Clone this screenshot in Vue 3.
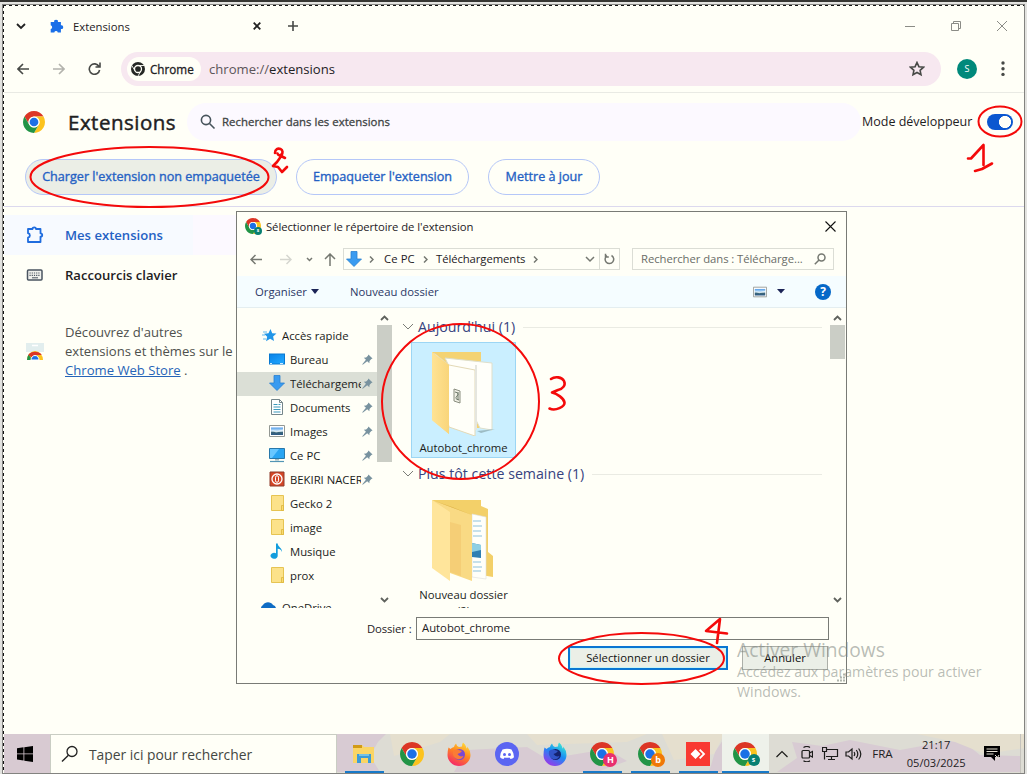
<script setup>
const quick = [
  { name: 'Bureau', icon: 'desk', pin: true },
  { name: 'Téléchargements', icon: 'down', pin: true, on: true },
  { name: 'Documents', icon: 'doc', pin: true },
  { name: 'Images', icon: 'pic', pin: true },
  { name: 'Ce PC', icon: 'pc', pin: true },
  { name: 'BEKIRI NACER', icon: 'red', pin: true },
  { name: 'Gecko 2', icon: 'fold' },
  { name: 'image', icon: 'fold' },
  { name: 'Musique', icon: 'note' },
  { name: 'prox', icon: 'fold' },
]
</script>

<template>
  <svg class="defs" width="0" height="0">
    <defs>
      <linearGradient id="gBlue" x1="0" y1="0" x2="1" y2="1"><stop offset="0" stop-color="#0a84e8" /><stop offset="1" stop-color="#21a8ff" /></linearGradient>
      <linearGradient id="gFire" x1=".8" y1="0" x2=".3" y2="1"><stop offset="0" stop-color="#ffe03a" /><stop offset=".45" stop-color="#ff8a1f" /><stop offset="1" stop-color="#f5256a" /></linearGradient>
      <linearGradient id="gDev" x1=".8" y1="0" x2=".2" y2="1"><stop offset="0" stop-color="#3ff0d0" /><stop offset=".45" stop-color="#1a8cf5" /><stop offset="1" stop-color="#a530e8" /></linearGradient>
      <linearGradient id="gFold" x1="0" y1="0" x2="1" y2="0"><stop offset="0" stop-color="#ffe394" /><stop offset="1" stop-color="#f9d57a" /></linearGradient>
      <linearGradient id="gSky" x1="0" y1="0" x2="0" y2="1"><stop offset="0" stop-color="#4f9be8" /><stop offset=".5" stop-color="#d4ecfa" /><stop offset=".6" stop-color="#3e6878" /><stop offset="1" stop-color="#2c5a86" /></linearGradient>
    </defs>
    <symbol id="chrome" viewBox="2 2 44 44">
      <path fill="#dc3626" d="M24 13h19.05A22 22 0 0 0 4.95 13l9.52 16.5A11 11 0 0 1 24 13z" />
      <path fill="#fcc31e" d="M43.05 13H24a11 11 0 0 1 9.53 16.5L24 46a22 22 0 0 0 19.05-33z" />
      <path fill="#229446" d="M4.95 13A22 22 0 0 0 24 46l9.53-16.5a11 11 0 0 1-19.06 0z" />
      <circle cx="24" cy="24" r="11" fill="#fffff7" /><circle cx="24" cy="24" r="8.7" fill="#1b70e6" />
    </symbol>
    <symbol id="desk" viewBox="0 0 16 16"><path d="M0 2.5h16v11H0z" fill="#0878d0" /><path d="M1 3.5h14v9H1z" fill="url(#gBlue)" /><path d="M1 12.5h2M11 12.5h3" stroke="#cfeaff" /></symbol>
    <symbol id="down" viewBox="0 0 16 16"><path d="M5 .5h6V8h4.500L8 15.500.5 8H5z" fill="#3a9bf0" stroke="#2a80d0" stroke-width=".8" /></symbol>
    <symbol id="doc" viewBox="0 0 16 16"><path d="M2.500.5h8l3 3v12h-11z" fill="#fff" stroke="#75868a" /><path d="M4.500 5.500h4M4.500 8h7M4.500 10.500h7M4.500 13h7M9.500 5.500h2" stroke="#3c9abb" stroke-width="1.200" /><path d="M10.500.5v3h3" fill="none" stroke="#75868a" /></symbol>
    <symbol id="pic" viewBox="0 0 16 16"><path d="M.5 2.500h15v11H.5z" fill="#fff" stroke="#939893" /><path d="M2 4.500h12v7.500H2z" fill="url(#gSky)" /><path d="M2 7l5 2.500 7-1.500v-1.500l-6 1.500z" fill="#f0f8fb" opacity=".7" /></symbol>
    <symbol id="pc" viewBox="0 0 16 16"><path d="M.5 1.500h15v10H.5z" fill="#2aa5f2" stroke="#2878aa" /><path d="M1 2h9L3 11H1z" fill="#68c7ff" /><path d="M6 12h4v1.500H6z" fill="#a3bac0" /><path d="M1 14.500h14" stroke="#5295b5" stroke-width="1.200" /></symbol>
    <symbol id="red" viewBox="0 0 16 16"><path d="M1 1h14v14H1z" fill="#d54626" stroke="#8f3d2c" /><circle cx="8" cy="8" r="5" fill="none" stroke="#fff" stroke-width="1.300" /><rect x="6.500" y="4.700" width="3" height="6.600" rx="1.500" fill="none" stroke="#fff" /></symbol>
    <symbol id="fold" viewBox="0 0 16 16"><path d="M2.500 .5h12v15h-12z" fill="#fce28a" stroke="#e6c452" /><path d="M12.500 10.500h2v5h-2z" fill="#fadb70" stroke="#dcb63d" stroke-width=".8" /></symbol>
    <symbol id="note" viewBox="0 0 16 16"><path d="M7 .5h1.700c.2 3.500 4.800 4.500 4.300 8.500-.4-2-2-3-4.300-3.200V12.500A3.600 3 0 1 1 7 10.200z" fill="#139ddd" /></symbol>
    <symbol id="pin" viewBox="0 0 12 12"><path d="M7 .5 11.500 5l-1.300.5L8.200 7.500l-.2 2.500-2.300-2.200L.8 11.800.3 11.300l4-5L2 4l2.500-.2 2-2z" fill="#78929f" /></symbol>
    <symbol id="flame" viewBox="0 0 24 24"><path d="M1.500 5.500 3.500 7q1.500-1.500 3.500-2 .3-2 2-3.500.5 2.500 3 3.500l3-.5q0-2.500 1-4 2 1.500 3 4l.5 2q1-.5.800-2 3.200 4 3.200 8.500a11.500 11 0 0 1-23 0q0-4 1-7.500z" /></symbol>
  </svg>

  <div class="shot">
    <div class="screen">
      <header class="tabs">
        <svg class="t-chev" width="10" height="10"><path d="M1 3l4 4 4-4" class="ln dark" /></svg>
        <svg class="t-puz" width="14" height="14" viewBox="0 0 14 14"><path d="M1.500 3H4.200a1.900 1.900 0 1 1 3.700 0h3v3.300a1.900 1.900 0 1 1 0 3.700v3.500H7.800a1.800 1.800 0 0 0-3.500 0H.7V10a1.900 1.900 0 0 0 0-3.700V3z" fill="#1a6fe8" /></svg>
        <span class="t-name">Extensions</span>
        <svg class="t-x" width="8" height="8"><path d="M.7.7l6.600 6.600M7.300.7.7 7.300" class="ln dark" /></svg>
        <svg class="t-plus" width="10" height="10"><path d="M5 0v10M0 5h10" class="ln" /></svg>
        <div class="winbtns">
          <svg width="10" height="10"><path d="M0 5.500h10" class="thin" /></svg>
          <svg width="10" height="10"><path d="M.5 2.500h7v7h-7zM2.500 2.500v-2h7v7h-2" class="thin" /></svg>
          <svg width="10" height="10"><path d="M0 0l10 10M10 0 0 10" class="thin" /></svg>
        </div>
      </header>

      <nav class="toolbar">
        <svg class="b-back" width="12" height="12"><path d="M12 6H1M6 1 1 6l5 5" class="ln" /></svg>
        <svg class="b-fwd" width="12" height="12"><path d="M0 6h11M6 1l5 5-5 5" class="ln pale" /></svg>
        <svg class="b-rel" width="13" height="13"><path d="M11 4.500A5.200 5.200 0 1 0 11.600 8M12 .5v4.500H7.500" class="ln" /></svg>
        <div class="omni">
          <div class="chip">
            <svg width="14" height="14" viewBox="0 0 14 14"><circle cx="7" cy="7" r="7" fill="#252725" /><circle cx="7" cy="7" r="3.500" fill="none" stroke="#fffff7" stroke-width="1.300" /><path d="M7 3.500h6.500M4 8.800.8 3.500M10 8.800 7 14" stroke="#fffff7" stroke-width=".9" /></svg>
            <span>Chrome</span>
          </div>
          <span class="url"><i>chrome://</i>extensions</span>
          <svg class="star" width="16" height="16" viewBox="0 0 16 16"><path d="M8 1.500l1.900 4.200 4.600.5-3.400 3.100.9 4.500L8 11.500l-4 2.300.9-4.500L1.500 6.200l4.600-.5z" class="ln" /></svg>
        </div>
        <span class="avatar">S</span>
        <svg class="dots" width="4" height="16"><circle cx="2" cy="2" r="1.700" /><circle cx="2" cy="7.700" r="1.700" /><circle cx="2" cy="13.400" r="1.700" /></svg>
      </nav>

      <div class="head">
        <svg class="logo" width="22" height="22"><use href="#chrome" /></svg>
        <h1>Extensions</h1>
        <div class="search">
          <svg width="16" height="16"><circle cx="6" cy="6" r="4.600" class="ln slate" /><path d="M9.500 9.500l5 5" class="ln slate" /></svg>
          <span>Rechercher dans les extensions</span>
        </div>
        <span class="dev">Mode développeur</span>
        <span class="toggle"></span>
      </div>

      <div class="acts">
        <button class="a1">Charger l'extension non empaquetée</button>
        <button class="a2">Empaqueter l'extension</button>
        <button class="a3">Mettre à jour</button>
      </div>

      <aside>
        <div class="s-item sel">
          <svg width="18" height="18" viewBox="0 0 18 18"><path d="M2 3h4.500c0-2.200 3.500-2.200 3.500 0h4.500v4.300c2.300 0 2.300 3.400 0 3.400V16H2v-4.300c2.500-.8 2.500-3.800 0-4.500z" fill="none" stroke="#1f6cde" stroke-width="1.800" stroke-linejoin="round" /></svg>
          <span>Mes extensions</span>
        </div>
        <div class="s-item">
          <svg width="18" height="14" viewBox="0 0 18 14"><rect x="1.500" y="2" width="14.500" height="10" rx="1" fill="#f0f1ed" stroke="#4a5460" stroke-width="1.500" /><path d="M3.500 5h11M3.500 7.300h11" stroke="#4a5460" stroke-width="1.200" stroke-dasharray="1.200 1" /><path d="M6 9.800h6" stroke="#4a5460" /></svg>
          <span>Raccourcis clavier</span>
        </div>
        <div class="store">
          <svg width="18" height="18" viewBox="0 0 18 18"><path d="M0 0h18v9H0z" fill="#e2eeee" /><path d="M6 2.500h6" stroke="#fff" stroke-width="1.500" /><path d="M1 17a8 9 0 0 1 16 0z" fill="#fcc31e" /><path d="M1 17q0-3 1.500-5.500L6.500 17z" fill="#229446" /><path d="M2.200 12a8 7 0 0 1 13.600 0L11 12l-5 2.500z" fill="#dc3626" /><path d="M5 17a4 4.500 0 0 1 8 0z" fill="#1b70e6" stroke="#fff" /></svg>
          <p>Découvrez d'autres<br>extensions et thèmes sur le<br><a>Chrome Web Store</a> .</p>
        </div>
      </aside>

      <footer class="taskbar">
        <svg class="noise" width="1020" height="38"><path fill="#d8cbd3" d="M333 0h49l-8 8-8 14 10 16h-43zM463 16l60-3 20 12 60-10 20 12-30 11H450zM723 0h16l-8 9 14 10-20 19h-20l6-20zM788 8l30 4 28-6 50 10 60-11 20 16 40 1v16H773l20-14z" /><path fill="#e5dfce" d="M386 0h60l-10 8-46 14zM523 0h120l-20 8-90 3zM658 0h62l-10 20-40 6zM913 0h108v14l-40 6-30-12z" /></svg>
        <div class="start"><svg width="16" height="16" viewBox="0 0 16 16"><path d="M0 2.200 6.500 1.300V7.500H0zM7.300 1.200 16 0v7.500H7.300zM0 8.300h6.500v6.200L0 13.600zM7.300 8.300H16V16l-8.700-1.200z" /></svg></div>
        <div class="find">
          <svg width="18" height="18" viewBox="0 0 18 18"><circle cx="11" cy="6.500" r="5" fill="none" stroke="#222" stroke-width="1.300" /><path d="M7.400 10.200 1 16.500" stroke="#222" stroke-width="1.400" /></svg>
          <span>Taper ici pour rechercher</span>
        </div>
        <div class="apps">
          <div class="app run"><svg width="24" height="24" viewBox="0 0 24 24"><path d="M1 3h9l2 2h10v16H1z" fill="#fad565" /><path d="M1 3h9v3H1z" fill="#d29b18" /><path d="M5 12h14v9h-3v-5H9v5H5z" fill="#3b9bd8" /><path d="M7 12h10v2H7z" fill="#73c1e8" /></svg></div>
          <div class="app"><svg width="24" height="24"><use href="#chrome" /></svg></div>
          <div class="app"><svg width="24" height="24" viewBox="0 0 24 24"><use href="#flame" fill="url(#gFire)" /><circle cx="12.500" cy="12.500" r="5.500" fill="#7a48d2" /><path d="M6 9q4-2.500 6.500-.8l2.500.8-2 2-2.500 1q2 3.500 6 2-2 4-6.500 3-5-2-4-8z" fill="#fb7c35" /></svg></div>
          <div class="app"><svg width="24" height="24" viewBox="0 0 24 24"><circle cx="12" cy="12" r="12" fill="#5b65f2" /><path d="M7.500 7.500Q12 6 16.500 7.500 19 11 19 15.300 17.500 17 15.500 17l-1-1.500q-2.500.7-5 0l-1 1.500Q6.500 17 5 15.300 5 11 7.500 7.500z" fill="#fff" /><circle cx="9.500" cy="12.500" r="1.500" fill="#5b65f2" /><circle cx="14.500" cy="12.500" r="1.500" fill="#5b65f2" /></svg></div>
          <div class="app"><svg width="24" height="24" viewBox="0 0 24 24"><use href="#flame" fill="url(#gDev)" /><circle cx="12.500" cy="12.500" r="5.500" fill="#15226f" /><path d="M6 9q4-2.500 6.500-.8l2.500.8-2 2-2.500 1q2 3.500 6 2-2 4-6.500 3-5-2-4-8z" fill="#3154c8" /></svg></div>
          <div class="app run"><svg width="24" height="24"><use href="#chrome" /></svg><b class="bh">H</b></div>
          <div class="app run"><svg width="24" height="24"><use href="#chrome" /></svg><b class="bb">b</b></div>
          <div class="app run"><svg width="24" height="24"><path d="M0 0h24v24H0z" fill="#f93a32" /><path d="M9.500 7l5 5-5 5-5-5zM13 8.300 14.300 7l5 5-5 5L13 15.700l3.700-3.700z" fill="#fff" /></svg></div>
          <div class="app run act"><svg width="24" height="24"><use href="#chrome" /></svg><b class="bs">s</b></div>
        </div>
        <div class="tray">
          <svg class="k1" width="12" height="8"><path d="M.5 7 6 1.500 11.500 7" class="tk" /></svg>
          <svg class="k2" width="12" height="16"><rect x="1" y="4.500" width="7.500" height="7.500" rx="1" class="tk" /><path d="M8.500 7l3-1.500v5.500l-3-1.500M2.500 1.500Q6-.5 9 1.500M2.500 14.800q3.500 2 6.500 0" class="tk" /></svg>
          <svg class="k3" width="17" height="15"><path d="M4.500 3.500h11v7H4M9.500 10.500v3M6 13.500h7M.5 1.500h4v4h-4zM2.500 5.500v8" class="tk" /></svg>
          <svg class="k4" width="17" height="14"><path d="M1 5h2.500L7 2v10L3.500 9H1zM9 5q1.500 2 0 4M11.300 3q3 4 0 8M13.600 1.500q4.400 5.500 0 11" class="tk" /></svg>
          <span class="fra">FRA</span>
          <div class="clock"><span>21:17</span><span>05/03/2025</span></div>
          <svg class="k5" width="17" height="17" viewBox="0 0 17 17"><path d="M0 1h16v11h-5v4l-4-4H0z" /><path d="M2.500 4h11M2.500 6.500h11M2.500 9h7" stroke="#e4e0d2" /><path d="M11 10l4 4m0-4-3 5" stroke="#e4e0d2" /></svg>
        </div>
      </footer>
    </div>

    <section class="dialog">
      <div class="d-title">
        <span class="d-ico"><svg width="16" height="16"><use href="#chrome" /></svg><b>s</b></span>
        <span class="d-cap">Sélectionner le répertoire de l'extension</span>
        <svg class="d-close" width="11" height="11"><path d="M.5.5l10 10M10.500.5l-10 10" stroke="#111" stroke-width="1.100" /></svg>
      </div>
      <div class="d-nav">
        <svg class="n1" width="12" height="11"><path d="M12 5.500H1M5.500 1 1 5.500 5.500 10" class="gr" /></svg>
        <svg class="n2" width="12" height="11"><path d="M0 5.500h11M6.500 1 11 5.500 6.500 10" class="gr faint" /></svg>
        <svg class="n3" width="7" height="5"><path d="M1 1l2.500 2.500L6 1" class="gr" /></svg>
        <svg class="n4" width="12" height="13"><path d="M6 13V1M1 6l5-5 5 5" class="gr" /></svg>
        <div class="addr">
          <svg class="ad" width="16" height="16"><use href="#down" /></svg>
          <svg class="c1" width="5" height="7"><path d="M1 .5l3 3-3 3" class="gr" /></svg>
          <span class="p1">Ce PC</span>
          <svg class="c2" width="5" height="7"><path d="M1 .5l3 3-3 3" class="gr" /></svg>
          <span class="p2">Téléchargements</span>
          <svg class="c3" width="5" height="7"><path d="M1 .5l3 3-3 3" class="gr" /></svg>
          <svg class="c4" width="10" height="7"><path d="M1 1l4 4 4-4" class="gr" /></svg>
          <div class="refresh"><svg width="11" height="12"><path d="M7.500 2.500A4.300 4.300 0 1 1 3 2.700M1.500.8V4h3.300" class="gr" /></svg></div>
        </div>
        <div class="d-search"><span>Rechercher dans : Télécharge...</span><svg width="12" height="12"><circle cx="7.500" cy="4.500" r="3.500" class="gr" /><path d="M5 7 .8 11.200" class="gr" /></svg></div>
      </div>
      <div class="d-cmd">
        <span class="org">Organiser</span><svg class="tri" width="8" height="5"><path d="M0 0h8L4 5z" /></svg>
        <span class="new">Nouveau dossier</span>
        <svg class="view" width="14" height="12" viewBox="0 1.500 16 13"><use href="#pic" width="16" height="16" /></svg>
        <svg class="tri t2" width="8" height="5"><path d="M0 0h8L4 4.500z" /></svg>
        <span class="help">?</span>
      </div>
      <div class="d-body">
        <div class="tree">
          <div class="row root"><svg width="15" height="15" viewBox="0 0 15 15"><path d="M8.500 1l1.700 4.300 4.300.3-3.400 3 .9 4.400-3.900-2.300L4 13.200l1.200-4.500L2 5.700l4.500-.4z" fill="#2196e8" /><path d="M1 4h4M0 7h3M1 11h3" stroke="#62b9ed" /></svg><span>Accès rapide</span></div>
          <div v-for="q in quick" :key="q.name" class="row" :class="{ on: q.on }">
            <svg width="16" height="16"><use :href="'#' + q.icon" /></svg><span>{{ q.name }}</span>
            <svg v-if="q.pin" class="pin" width="11" height="11"><use href="#pin" /></svg>
          </div>
          <div class="row root one"><svg width="18" height="14" viewBox="0 0 18 14"><path d="M4 12a4 4 0 0 1 0-7 6 6 0 0 1 10 0q4 1 3 7z" fill="#0f6cc4" /></svg><span>OneDrive</span></div>
        </div>
        <div class="bar b-left"><svg width="9" height="6"><path d="M1 5l3.500-3.500L8 5" class="ar" /></svg><div class="thumb"></div><svg width="9" height="6"><path d="M1 1l3.500 3.500L8 1" class="ar" /></svg></div>
        <div class="list">
          <div class="group"><svg width="12" height="7"><path d="M1 1l5 5 5-5" /></svg><span>Aujourd'hui (1)</span><hr></div>
          <div class="tile picked">
            <svg width="70" height="86" viewBox="0 0 70 86"><path d="M3 2h49v76H30L3 60z" fill="#f4d373" /><path d="M3 2 20 15v69L3 70z" fill="url(#gFold)" /><path d="M16 8l47 5v67l-12-2z" fill="#fffffa" stroke="#dedfcb" /><path d="M48 81l18-2-14 4z" fill="#9dbcc4" /><path d="M5 3l15 12 26 5v66L20 77z" fill="#fffff9" stroke="#e3d9b6" /><path d="M3 2 20 15v69L3 70z" fill="url(#gFold)" /><path d="M47 15v65" stroke="#e5e6df" stroke-width="2" /><path d="M25 39l6 2v12l-6-2z" fill="#f1f1e6" stroke="#898d7f" /><path d="M26 42q5 1 2 4t2 4M29 42v8" stroke="#6d7868" fill="none" /></svg>
            <span>Autobot_chrome</span>
          </div>
          <div class="group second"><svg width="12" height="7"><path d="M1 1l5 5 5-5" /></svg><span>Plus tôt cette semaine (1)</span><hr></div>
          <div class="tile">
            <svg width="70" height="86" viewBox="0 0 70 86"><path d="M3 3h49v6l7 3v43l5 4v21l-12-2z" fill="#f3d069" /><path d="M43 17l14 3v62l-14-2z" fill="#fffffa" stroke="#ddd" stroke-width=".6" /><path d="M44 24h8m-8 5h9m-9 5h8m-8 5h9m-9 26h8m-8 5h9m-9 4h8" stroke="#8dc1dc" /><path d="M43 46l9 2v13l-9-1z" fill="#2f7fb2" /><path d="M43 46l9 2v5l-9 2z" fill="#8ecfe4" /><path d="M3 3l40 15v66l-22-8z" fill="#f9da84" /><path d="M3 3l18 12v69L3 71z" fill="#ffe59b" /><path d="M21 25l11 3v51l-11-4z" fill="#f5ce76" /><path d="M3 3l40 15-20-8z" fill="#d7a940" /></svg>
            <span>Nouveau dossier<br>(2)</span>
          </div>
        </div>
        <div class="bar b-right"><svg width="9" height="6"><path d="M1 5l3.500-3.500L8 5" class="ar" /></svg><div class="thumb"></div><svg width="9" height="6"><path d="M1 1l3.500 3.500L8 1" class="ar" /></svg></div>
      </div>
      <div class="d-file"><label>Dossier :</label><div class="field">Autobot_chrome</div></div>
      <div class="d-btns"><button class="ok">Sélectionner un dossier</button><button class="no">Annuler</button></div>
      <svg class="grip" width="9" height="9"><path d="M7 1.500h2M4 4.500h5M1 7.500h8" stroke="#b0b5ad" stroke-width="2" stroke-dasharray="2 1" /></svg>
    </section>

    <div class="water"><span class="w1">Activer Windows</span><span>Accédez aux paramètres pour activer</span><span>Windows.</span></div>

    <!-- Hand-drawn step marks -->
    <svg class="marks" width="1027" height="774">
      <ellipse cx="149.500" cy="177" rx="119" ry="30" /><ellipse cx="1000" cy="121.500" rx="21.500" ry="15" />
      <ellipse cx="460.500" cy="401.500" rx="78.500" ry="77.500" /><ellipse cx="641.500" cy="658.500" rx="82.500" ry="25.500" />
      <g class="pen">
        <path d="M968 158.500h3l12.500-13.500v20M975 171l7-2 10-5.500" />
        <path d="M275 153c0-4 3-5 5.500-4s2.500 4 1 5.500-3.500 1-4-1M285 158l-4-2M282 155l-5 7-4 4 5 1 4 5 5-5" />
        <path d="M551 379c4-3 11-2 13 2s-1 8-6 9l-6 2.500c5 1 12 6 12.500 10s-9 9-15 6" />
        <path d="M717 643l3-24-14 12 21 2.500" />
      </g>
    </svg>
  </div>
</template>

<style>
body { margin: 0; overflow: hidden; }
</style>

<style scoped>
* { box-sizing: border-box; }
svg { display: block; flex: none; }
.defs { position: absolute; }
.shot { position: relative; width: 1027px; height: 774px; background: #e3e3e0; border-top: 2px solid #353532; font-family: "Open Sans", "Noto Sans", sans-serif; color: #1e211f; white-space: nowrap; overflow: hidden; font-size: 11.3px; padding: 2px 2px 0 2px; }
.screen { height: 770px; width: 1023px; border: 1px solid #838380; background: #fffff7; position: relative; display: flex; flex-direction: column; padding-left: 1px; }
.screen::before { content: ""; position: absolute; left: 0; top: 0; right: 0; height: 1px; background: repeating-linear-gradient(90deg, #111 0 3px, #fffff7 3px 6px); }
.screen::after { content: ""; position: absolute; left: 0; top: 0; bottom: 0; width: 1px; background: repeating-linear-gradient(#111 0 3px, #fffff7 3px 6px); }
.ln { fill: none; stroke: #474946; stroke-width: 1.6; }
.dark { stroke: #222; stroke-width: 1.8; }
.pale { stroke: #b3b3ad; }
.slate { stroke: #47545c; }
.thin { fill: none; stroke: #8b8c86; }
.tabs { height: 43px; display: flex; align-items: center; padding: 0 0 1px 12px; }
.t-puz { margin-left: 24px; }
.t-name { margin-left: 9px; width: 180px; }
.t-plus { margin-left: 27px; }
.winbtns { margin-left: auto; margin-right: 17px; display: flex; gap: 36px; }
.toolbar { height: 45px; display: flex; align-items: center; border-bottom: 1px solid #e9eae4; padding: 0 0 3px 13px; }
.b-fwd { margin-left: 24px; }
.b-rel { margin-left: 23px; }
.omni { margin-left: 20px; width: 820px; height: 34px; border-radius: 17px; background: #f7e8f0; display: flex; align-items: center; padding-left: 6px; }
.chip { width: 74px; height: 24px; border-radius: 12px; background: #fffff7; display: flex; align-items: center; gap: 5px; padding-left: 4px; font-size: 11.7px; -webkit-text-stroke: .3px; }
.url { margin-left: 8px; font-size: 13.1px; }
.url i { font-style: normal; color: #5c5559; }
.star { margin-left: auto; margin-right: 16px; }
.avatar { margin-left: 16px; width: 20px; height: 20px; border-radius: 50%; background: #00897b; color: #fff; font-size: 9px; line-height: 20px; text-align: center; }
.dots { margin-left: 24px; fill: #474946; }
.head { height: 57px; display: flex; align-items: center; padding-left: 19px; }
h1 { margin: 0 0 0 23px; font-size: 20.5px; font-weight: 400; line-height: 30px; width: 119px; letter-spacing: .5px; -webkit-text-stroke: .45px; }
.search { width: 674px; height: 38px; border-radius: 19px; background: #fcf9ff; display: flex; align-items: center; gap: 6px; padding-left: 13px; font-size: 11.4px; color: #3f4444; -webkit-text-stroke: .3px; letter-spacing: .03px; }
.dev { margin-left: 1px; width: 125px; font-size: 12.500px; }
.toggle { width: 26px; height: 16px; border-radius: 8px; background: radial-gradient(circle at 18px 8px, #fffff7 5.800px, #0b57d0 6.300px); }
.acts { height: 57px; display: flex; align-items: center; gap: 19px; padding: 0 0 3px 21px; border-bottom: 1px solid #dcd9ee; }
button { font: 400 12.6px "Open Sans", sans-serif; padding: 0; white-space: nowrap; }
.acts button { height: 36px; border-radius: 18px; border: 1px solid #b5c7f8; background: #fffff7; color: #2461c4; -webkit-text-stroke: .35px; }
.acts .a1 { width: 252px; background: #ebeee6; }
.a2 { width: 173px; }
.a3 { width: 112px; }
aside { width: 232px; padding-top: 8px; flex: 1; }
.s-item { height: 40px; display: flex; align-items: center; gap: 21px; padding-left: 22px; font-size: 13.1px; font-weight: 600; }
.sel { background: linear-gradient(90deg, #f7faff 189px, #fcf9ff 189px); color: #2461c4; }
.store { display: flex; align-items: center; gap: 21px; padding-left: 22px; margin-top: 28px; }
.store p { margin: 0; font-size: 13.1px; line-height: 19px; color: #4e504d; }
.store a { color: #2664b8; text-decoration: underline; }
.taskbar { height: 39px; display: flex; position: relative; background: #dddcd4; }
.noise { position: absolute; left: 0; top: 0; }
.start { width: 46px; display: flex; align-items: center; justify-content: center; background: #d8cad2; padding-right: 4px; position: relative; }
.find { width: 287px; background: #fffff7; border: 1px solid #c9cdc3; border-bottom: 0; display: flex; align-items: center; gap: 10px; padding-left: 10px; font-size: 13.850px; color: #444742; position: relative; }
.apps { display: flex; padding-left: 3px; }
.app { width: 47.700px; display: flex; align-items: center; justify-content: center; position: relative; padding-top: 1px; }
.app.run::after { content: ""; position: absolute; left: 5px; right: 4px; bottom: 0; height: 2px; background: #1879c8; }
.app.act { background: #eef1ea; }
.app.act::after { left: 0; right: 0; }
.app b { position: absolute; left: 25px; top: 19px; width: 14px; height: 14px; border-radius: 50%; color: #fff; font-size: 9px; line-height: 13px; text-align: center; }
.app .bh { background: #e8306f; }
.app .bb { background: #f07808; }
.app .bs { background: #087f72; left: 26px; top: 20px; width: 12px; height: 12px; font-size: 7px; line-height: 11px; }
.tray { position: relative; flex: 1; display: flex; align-items: center; border-right: 1px solid #c5c3bd; margin-right: 3px; }
.tk { fill: none; stroke: #1c1c1a; stroke-width: 1.200; }
.k1 { margin-left: 7px; }
.k2 { margin-left: 13px; }
.k3 { margin-left: 9px; }
.k4 { margin-left: 6px; }
.fra { margin-left: 10px; font-size: 11.6px; }
.clock { margin-left: 14px; width: 59px; display: flex; flex-direction: column; align-items: center; line-height: 18px; font-size: 11.1px; }
.k5 { margin-left: 18px; }
.dialog { position: absolute; left: 236px; top: 209px; width: 611px; height: 473px; background: #fffff7; border: 1px solid #797b76; }
.d-title { height: 30px; display: flex; align-items: center; padding: 0 0 2px 8px; }
.d-cap { letter-spacing: -.07px; }
.d-ico { position: relative; margin-right: 5px; }
.d-ico b { position: absolute; right: -1px; bottom: -1px; width: 8px; height: 8px; border-radius: 50%; background: #087f72; color: #fff; font-size: 5px; line-height: 7px; text-align: center; }
.d-close { margin-left: auto; margin-right: 10px; }
.d-nav { height: 34px; display: flex; align-items: center; padding-left: 13px; }
.gr { fill: none; stroke: #757871; stroke-width: 1.5; }
.faint { stroke: #d5d6cf; }
.n2 { margin-left: 18px; }
.n3 { margin-left: 14px; }
.n4 { margin-left: 11px; }
.addr { margin-left: 7px; width: 277px; height: 22px; border: 1px solid #dbddd5; display: flex; align-items: center; }
.addr span, .d-search span { padding-bottom: 2px; }
.ad { margin-left: 2px; margin-right: 7px; }
.p1 { margin-left: 10px; width: 39px; letter-spacing: .1px; }
.p2 { margin-left: 8px; width: 97px; letter-spacing: -.08px; }
.c4 { margin-left: auto; margin-right: 4px; }
.refresh { width: 20px; height: 20px; border-left: 1px solid #dbddd5; display: flex; align-items: center; justify-content: center; }
.d-search { margin-left: 12px; width: 202px; height: 22px; border: 1px solid #dbddd5; display: flex; align-items: center; justify-content: space-between; padding: 0 7px 0 8px; color: #6a6d68; letter-spacing: -.06px; }
.d-cmd { height: 32px; background: #f5fdff; border-bottom: 1px solid #e4eef0; display: flex; align-items: center; padding-left: 18px; color: #2b3765; }
.org { width: 56px; }
.tri { fill: #1b2456; }
.new { margin-left: 31px; }
.view { margin-left: auto; }
.t2 { margin-left: 10px; }
.help { margin: 0 15px 0 30px; width: 16px; height: 16px; border-radius: 50%; background: #0568c8; color: #fff; font-size: 12px; font-weight: 700; text-align: center; line-height: 16px; }
.d-body { height: 300px; display: flex; overflow: hidden; }
.tree { width: 140px; padding-top: 16px; }
.row { height: 24px; display: flex; align-items: center; padding: 0 4px 2px 32px; color: #1a1c1a; }
.row span { margin-left: 5px; flex: 1; overflow: hidden; }
.row.on { background: #dbdfd6; }
.row.root { padding-left: 25px; }
.row.one { margin-top: 8px; padding-left: 22px; }
.pin { margin-left: 1px; }
.bar { width: 15px; display: flex; flex-direction: column; align-items: center; padding: 7px 0 5px; }
.bar .thumb { width: 15px; height: 137px; margin: 4px 0 auto; background: #cbcec6; }
.b-right .thumb { height: 34px; }
.b-right { width: 17px; margin-left: auto; }
.ar { fill: none; stroke: #5f625d; stroke-width: 1.8; }
.list { width: 430px; padding: 8px 0 0 10px; }
.group { display: flex; align-items: center; height: 21px; font-size: 14.2px; color: #37437f; }
.group svg path { fill: none; stroke: #7b7d77; }
.group span { margin-left: 4px; }
.group hr { flex: 1; border: 0; border-top: 1px solid #eaebe3; margin: 1px 0 0 8px; }
.tile { width: 105px; margin-left: 9px; height: 116px; display: flex; flex-direction: column; align-items: center; padding-top: 7px; border: 1px solid transparent; margin-top: 5px; text-align: center; color: #1a1c1a; line-height: 16px; }
.tile span { margin-top: 4px; }
.picked { background: #caefff; border-color: #9cd6f4; }
.second { margin-top: 5px; }
.d-file { display: flex; align-items: center; margin-top: 9px; height: 23px; padding-left: 130px; }
.d-file label { width: 44px; letter-spacing: -.1px; }
.field { margin-left: 5px; width: 413px; height: 23px; border: 1px solid #797b76; padding-left: 5px; line-height: 20px; }
.d-btns { display: flex; gap: 14px; margin: 6px 0 0 331px; }
.d-btns button { height: 24px; font-size: 11.3px; background: #ebefe7; color: #111; padding-bottom: 2px; }
.ok { width: 160px; border: 2px solid #0a76d2; box-shadow: inset 0 0 0 1px #c8f4f5; }
.d-btns .no { width: 86px; border: 1px solid #acafa8; }
.grip { position: absolute; right: 1px; bottom: 1px; }
.water { position: absolute; left: 737px; top: 635px; display: flex; flex-direction: column; color: rgba(125, 132, 125, .55); font-size: 14.150px; line-height: 20px; }
.w1 { font-size: 19.200px; line-height: 25px; }
.marks { position: absolute; left: 0; top: -2px; fill: none; stroke: #f40a0a; stroke-width: 2; }
.pen { stroke-width: 2.6; stroke-linecap: round; stroke-linejoin: round; }
</style>
